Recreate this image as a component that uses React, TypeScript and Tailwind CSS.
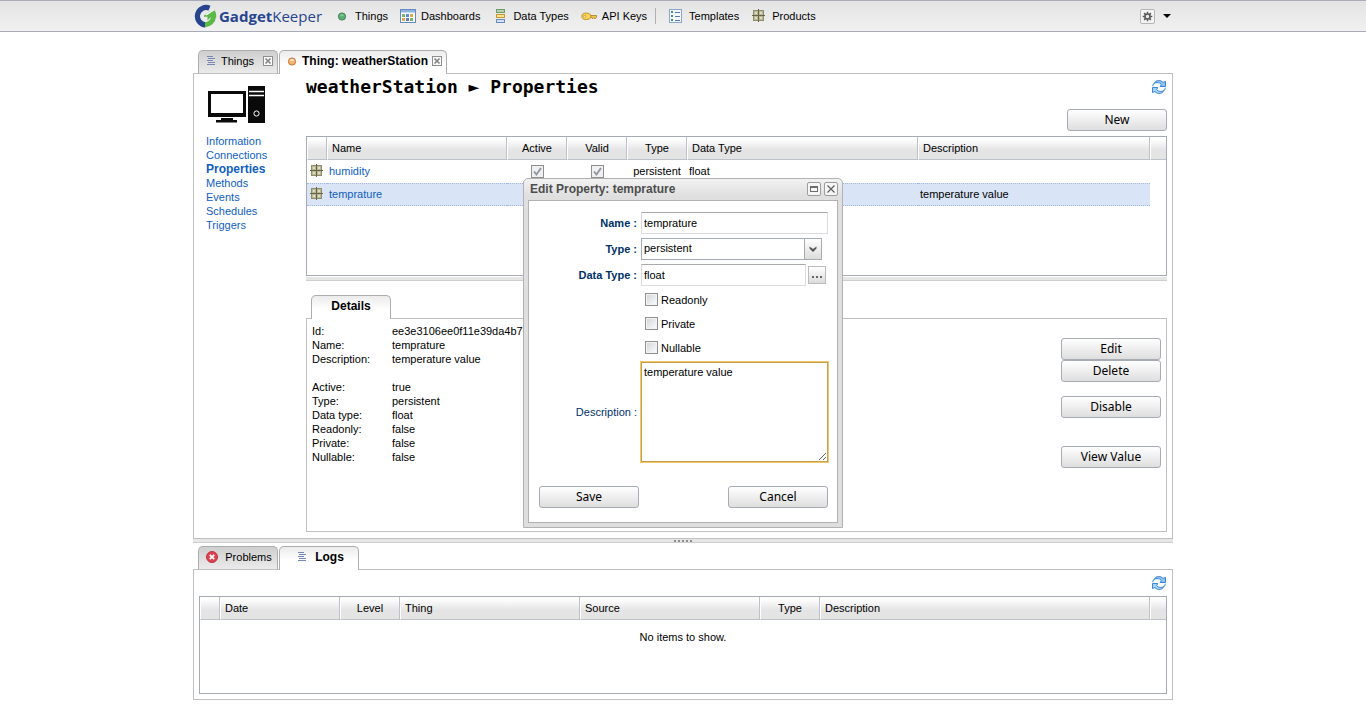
import React, { useState } from 'react';

interface Column {
  title: string;
  width: string;
  center?: boolean;
}

const propertyColumns: Column[] = [
  { title: '', width: 'w-[20px]' },
  { title: 'Name', width: 'w-[180px]' },
  { title: 'Active', width: 'w-[60px]', center: true },
  { title: 'Valid', width: 'w-[60px]', center: true },
  { title: 'Type', width: 'w-[60px]', center: true },
  { title: 'Data Type', width: 'w-[231px]' },
  { title: 'Description', width: '' },
  { title: '', width: 'w-[16px]' },
];

const logColumns: Column[] = [
  { title: '', width: 'w-[20px]' },
  { title: 'Date', width: 'w-[120px]' },
  { title: 'Level', width: 'w-[60px]', center: true },
  { title: 'Thing', width: 'w-[180px]' },
  { title: 'Source', width: 'w-[180px]' },
  { title: 'Type', width: 'w-[60px]', center: true },
  { title: 'Description', width: '' },
  { title: '', width: 'w-[16px]' },
];

const properties = [
  { name: 'humidity', type: 'persistent', dataType: 'float', description: '', selected: false },
  { name: 'temprature', type: '', dataType: '', description: 'temperature value', selected: true },
];

const sections = ['Information', 'Connections', 'Properties', 'Methods', 'Events', 'Schedules', 'Triggers'];

const details = [
  ['Id:', 'ee3e3106ee0f11e39da4b7063a12c8e4'],
  ['Name:', 'temprature'],
  ['Description:', 'temperature value'],
  ['', ''],
  ['Active:', 'true'],
  ['Type:', 'persistent'],
  ['Data type:', 'float'],
  ['Readonly:', 'false'],
  ['Private:', 'false'],
  ['Nullable:', 'false'],
];

const Logo = () => (
  <svg className="w-6 h-6" viewBox="0 0 24 24">
    <path d="M16.5 4.2A8.7 8.7 0 1 0 12.5 20.9" fill="none" stroke="#27458f" strokeWidth="5.2" />
    <path d="M12 20.8A8.7 8.7 0 0 0 20.5 12.5" fill="none" stroke="#5cb947" strokeWidth="5" />
    <path d="M11 11.5L16.5 7.5L21 5.5C22.6 7.4 23.4 9.6 23.3 13.5H17.4L14.5 16.5V12.8H11z" fill="#5cb947" />
    <path d="M12.2 10.4L20.6 4.9L21.6 6.2L13.4 11.4z" fill="#f3f5ee" />
  </svg>
);

const DotIcon = () => (
  <svg className="w-4 h-4" viewBox="0 0 16 16">
    <circle cx="8" cy="8.5" r="3.6" fill="#5fae74" stroke="#3b8452" />
    <path d="M6 7.5A2.4 2.4 0 0 1 10 7.5z" fill="#a9dcb4" />
  </svg>
);

const DashboardIcon = () => (
  <svg className="w-4 h-4" viewBox="0 0 16 16">
    <rect x="0.5" y="1.5" width="15" height="13" fill="#fff" stroke="#6489bd" />
    <rect x="1" y="2" width="14" height="2.5" fill="#8fb2e2" />
    <path d="M2 6h3v3H2zM10 10h3v3h-3z" fill="#7db56f" />
    <path d="M6 6h3v3H6z" fill="#5b8fd0" />
    <path d="M10 6h3v3h-3zM2 10h3v3H2z" fill="#e2a74c" />
    <path d="M6 10h3v3H6z" fill="#5f7fb6" />
  </svg>
);

const StackIcon = () => (
  <svg className="w-4 h-4" viewBox="0 0 16 16">
    <rect x="4.5" y="1.500" width="8" height="3" fill="#b8d3a8" stroke="#719a6a" />
    <rect x="4.5" y="6.500" width="8" height="3" fill="#fbe38b" stroke="#c49636" />
    <rect x="4.5" y="11.500" width="8" height="3" fill="#d3e0f5" stroke="#6b8dbd" />
  </svg>
);

const KeyIcon = () => (
  <svg className="w-4 h-4" viewBox="0 0 16 16">
    <path d="M9 7.5H15.5V9L14.5 10.5H13.5L13 9.500L12 10.500H11V9.200H9z" fill="#f2cb4e" stroke="#a97b24" strokeWidth="0.8" />
    <ellipse cx="5.300" cy="8.300" rx="4.500" ry="3.200" fill="#f8d553" stroke="#c0912c" />
    <ellipse cx="3.600" cy="8.300" rx="1.200" ry="0.900" fill="#fff" stroke="#a97b24" strokeWidth="0.6" />
  </svg>
);

const TemplateIcon = () => (
  <svg className="w-4 h-4" viewBox="0 0 16 16">
    <rect x="1.5" y="1.5" width="12" height="13" fill="#f4f8fe" stroke="#8ba6cd" />
    <path d="M3 3h2v2H3zM3 7h2v2H3zM3 11h2v2H3z" fill="#3f9466" />
    <path d="M7 4.5h5M7 8.5h5M7 12.5h5" stroke="#5978ac" />
  </svg>
);

const ProductIcon = () => (
  <svg className="w-4 h-4 shrink-0" viewBox="0 0 16 16">
    <rect x="2" y="2" width="11" height="11" fill="#8f8e6c" />
    <path d="M3 3h4v4H3zM8 3h4v4H8zM3 8h4v4H3zM8 8h4v4H8z" fill="#b9b894" />
    <path d="M4 4h2v2H4zM9 4h2v2H9zM4 9h2v2H4zM9 9h2v2H9z" fill="#dddcc4" />
    <path d="M7.5 1v13M1 7.5h13" stroke="#66654a" />
  </svg>
);

const LinesIcon = () => (
  <svg className="w-4 h-4" viewBox="0 0 16 16">
    <path d="M4 3.5h6M5 5.5h7M4 7.5h6M5 9.5h7M4 11.5h8" stroke="#7788b4" />
  </svg>
);

const ThingIcon = () => (
  <svg className="w-4 h-4" viewBox="0 0 16 16">
    <circle cx="8" cy="8.5" r="3.6" fill="#f6b56c" stroke="#c9713b" />
    <path d="M5.5 8A2.6 2.6 0 0 1 10.5 8z" fill="#fde9c9" />
  </svg>
);

const ErrorIcon = () => (
  <svg className="w-4 h-4" viewBox="0 0 16 16">
    <circle cx="8" cy="8" r="5.5" fill="#dd4250" stroke="#c0303f" />
    <path d="M5.8 5.8l4.4 4.4M10.2 5.8l-4.4 4.4" stroke="#fff" strokeWidth="1.8" />
  </svg>
);

const CloseIcon = () => (
  <svg className="w-[10px] h-[10px]" viewBox="0 0 10 10">
    <rect x="0.5" y="0.5" width="9" height="9" fill="#fafafa" stroke="#8e8e8e" />
    <path d="M2.5 2.5l5 5M7.5 2.5l-5 5" stroke="#858585" strokeWidth="1.7" />
  </svg>
);

const RefreshIcon = () => (
  <svg className="w-4 h-4" viewBox="0 0 16 16">
    <path d="M3 4.500C5 0.800 9.500 0.600 12 3.400L14.500 2.500V7.500H9.200L10.400 5.400C8.400 3.200 5.500 3 3 4.500z" fill="#8cc4f5" stroke="#2e7bcb" strokeWidth="0.9" />
    <path d="M13 11.500C11 15.200 6.500 15.400 4 12.600L1.500 13.500V8.500H6.800L5.600 10.600C7.600 12.800 10.500 13 13 11.500z" fill="#a6d4fa" stroke="#2e7bcb" strokeWidth="0.9" />
    <path d="M1.600 7.300C1.800 5.600 2.700 4.600 4 4M14.400 8.700C14.200 10.400 13.300 11.400 12 12" fill="none" stroke="#5aa4e8" strokeWidth="1.200" />
  </svg>
);

const ComputerIcon = () => (
  <svg className="w-[58px] h-[38px]" viewBox="0 0 58 38">
    <path d="M0 5h38v26H0zM3 8v19h32V8z" fill="#0a0a0a" fillRule="evenodd" />
    <path d="M13 32h12v2h4v2.500H8V34h5z" fill="#0a0a0a" />
    <path d="M40 0h17v37H40z" fill="#0a0a0a" />
    <path d="M41 5.5h15M41 9.5h15" stroke="#fff" strokeWidth="1.6" />
    <circle cx="48.500" cy="27.500" r="2.600" fill="none" stroke="#fff" />
  </svg>
);

const GearIcon = () => (
  <svg className="w-[11px] h-[11px]" viewBox="0 0 11 11">
    <path d="M5.500 0.700v9.600M0.700 5.500h9.600M2.100 2.100l6.800 6.800M8.900 2.100l-6.800 6.800" stroke="#5a5a5a" strokeWidth="1.500" />
    <circle cx="5.500" cy="5.500" r="2.500" fill="#eee" stroke="#5a5a5a" strokeWidth="1.600" />
  </svg>
);

const Button = ({ label, onClick }: { label: string; onClick?: () => void }) => (
  <button
    onClick={onClick}
    className="block w-[100px] h-[22px] rounded-[3px] border border-[#a7abb4] bg-gradient-to-b from-white to-[#dedede] text-center text-xs leading-5 text-black font-['Noto_Sans',sans-serif]"
  >
    {label}
  </button>
);

const HeaderRow = ({ columns }: { columns: Column[] }) => (
  <thead>
    <tr className="h-[23px]">
      {columns.map((c, i) => (
        <th
          key={i}
          className={`${c.width} border-b border-b-[#bdc1c9] border-r border-r-[#bdc1c9] border-l border-l-white last:border-r-0 bg-gradient-to-b from-white from-10% to-[#e4e4e4] to-60% px-1 font-normal ${c.center ? 'text-center' : 'text-left'}`}
        >
          {c.title}
        </th>
      ))}
    </tr>
  </thead>
);

const Tick = () => (
  <span className="relative inline-block w-[13px] h-[13px] align-middle">
    <input type="checkbox" checked readOnly aria-label="enabled" className="block appearance-none w-[13px] h-[13px] border border-[#8f8f8f] bg-[#f0f0f0]" />
    <svg className="absolute inset-0 w-[13px] h-[13px] pointer-events-none" viewBox="0 0 13 13">
      <path d="M3 6.500l2.500 3L10 3" fill="none" stroke="#9097a3" strokeWidth="1.900" />
    </svg>
  </span>
);

interface TabProps {
  label: string;
  icon?: React.ReactNode;
  active?: boolean;
  closable?: boolean;
}

const Tab = ({ label, icon, active, closable }: TabProps) => (
  <div
    className={`flex items-center rounded-t-[5px] border border-b-0 border-[#adadad] bg-gradient-to-b pb-[3px] ${
      active
        ? 'h-6 -mb-px from-[#ececec] to-white to-60% text-xs leading-[14px] font-bold'
        : 'h-[23px] from-[#cfcfcf] to-[#ebebeb]'
    } ${closable ? 'gap-[2px] px-1' : 'justify-center gap-[5px]'} ${closable && active ? 'w-[168px]' : 'w-[80px]'}`}
  >
    {icon}
    <button className="whitespace-nowrap">{label}</button>
    {closable && (
      <button aria-label={`Close ${label}`} className="ml-auto">
        <CloseIcon />
      </button>
    )}
  </div>
);

const MenuItem = ({ label, icon }: { label: string; icon: React.ReactNode }) => (
  <a href="#" className="flex items-center gap-[5px]">
    {icon}
    {label}
  </a>
);

const CheckRow = ({ label }: { label: string }) => (
  <label className="flex h-6 items-center gap-[3px] pl-[116px]">
    <input type="checkbox" className="appearance-none w-[13px] h-[13px] border border-[#8f8f8f] bg-gradient-to-br from-[#cfd3d8] to-white shadow-[inset_0_0_0_1px_#f4f4f4]" />
    {label}
  </label>
);

const EditDialog = ({ onClose }: { onClose: () => void }) => {
  const [name, setName] = useState('temprature');
  const [type, setType] = useState('persistent');
  const [dataType, setDataType] = useState('float');
  const [description, setDescription] = useState('temperature value');

  const labelStyle = 'w-[112px] shrink-0 pr-1 text-right text-[#003168]';
  const inputStyle = 'h-[22px] border border-[#dcdcdf] border-t-[#a9a9ae] bg-white px-[2px] outline-none';

  return (
    <div className="absolute inset-0 flex items-center justify-center">
      <div role="dialog" aria-label="Edit Property" className="w-[320px] rounded-t-[5px] border border-[#b2b2b2] bg-gradient-to-b from-[#f2f2f2] to-[#dfdfdf] to-5% px-1 pb-1">
        <div className="flex h-[21px] items-center gap-[3px] pl-[2px] text-xs font-bold text-[#4d4d4d]">
          <h2 className="flex-1">Edit Property: temprature</h2>
          <button aria-label="Maximize" className="flex w-[14px] h-[14px] items-center justify-center rounded-[2px] border border-[#9c9c9c] bg-[#f6f6f6]">
            <span className="w-2 h-[6px] border border-t-2 border-[#6c6c6c]" />
          </button>
          <button aria-label="Close" onClick={onClose} className="flex w-[14px] h-[14px] items-center justify-center rounded-[2px] border border-[#9c9c9c] bg-[#f6f6f6]">
            <svg className="w-2 h-2" viewBox="0 0 8 8">
              <path d="M0.500 0.500l7 7M7.500 0.500l-7 7" stroke="#5f5f5f" strokeWidth="1.200" />
            </svg>
          </button>
        </div>
        <form className="border border-[#b2b2b2] bg-white pt-[9px] pb-[14px]" onSubmit={(e) => e.preventDefault()}>
          <div className="flex h-[26px] items-center">
            <label htmlFor="name" className={`${labelStyle} font-bold`}>Name :</label>
            <input id="name" value={name} onChange={(e) => setName(e.target.value)} className={`${inputStyle} w-[187px]`} />
          </div>
          <div className="flex h-[26px] items-center">
            <label htmlFor="type" className={`${labelStyle} font-bold`}>Type :</label>
            <div className="relative">
              <select
                id="type"
                value={type}
                onChange={(e) => setType(e.target.value)}
                className="block w-[181px] h-[22px] appearance-none border border-[#a7abb4] bg-white px-[2px] pb-[2px] outline-none"
              >
                <option>persistent</option>
                <option>transient</option>
              </select>
              <span className="pointer-events-none absolute right-0 top-0 flex w-[18px] h-[22px] items-center justify-center border border-[#a7abb4] bg-gradient-to-b from-white to-[#dcdcdc]">
                <svg className="w-2 h-[6px]" viewBox="0 0 8 6">
                  <path d="M0.500 0.500L4 3L7.500 0.500V2.500L4 6L0.500 2.500z" fill="#555" />
                </svg>
              </span>
            </div>
          </div>
          <div className="flex h-[26px] items-center">
            <label htmlFor="dataType" className={`${labelStyle} font-bold`}>Data Type :</label>
            <input id="dataType" value={dataType} onChange={(e) => setDataType(e.target.value)} className={`${inputStyle} w-[165px]`} />
            <button type="button" aria-label="Browse" className="ml-[2px] flex w-[18px] h-[18px] items-center justify-center gap-[2px] border border-[#bcbcbc] bg-gradient-to-b from-white to-[#dcdcdc]">
              <span className="mt-[5px] w-[2px] h-[2px] bg-[#666]" />
              <span className="mt-[5px] w-[2px] h-[2px] bg-[#666]" />
              <span className="mt-[5px] w-[2px] h-[2px] bg-[#666]" />
            </button>
          </div>
          <CheckRow label="Readonly" />
          <CheckRow label="Private" />
          <CheckRow label="Nullable" />
          <div className="flex items-center pt-[2px]">
            <label htmlFor="description" className={labelStyle}>Description :</label>
            <textarea
              id="description"
              value={description}
              onChange={(e) => setDescription(e.target.value)}
              className="block w-[187px] h-[100px] border border-[#c9a050] bg-white p-[2px] leading-[14px] outline outline-[#f0c66a]"
            />
          </div>
          <div className="mt-6 flex justify-between pl-[10px] pr-[9px]">
            <Button label="Save" />
            <Button label="Cancel" onClick={onClose} />
          </div>
        </form>
      </div>
    </div>
  );
};

const App: React.FC = () => {
  const [dialogOpen, setDialogOpen] = useState(true);

  return (
    <div className="relative min-h-screen bg-white text-[11px] leading-[14px] text-black font-['Liberation_Sans',Arial,sans-serif]">
      <header className="h-8 border-y border-[#a9abb8] bg-gradient-to-b from-[#e3e3e3] to-[#f1f1f1]">
        <nav className="mx-auto flex h-full w-full max-w-[980px] items-center gap-3">
          <a href="#" className="flex items-center gap-[2px] font-['Open_Sans',sans-serif] text-[15px] leading-6 text-[#27458f]">
            <Logo />
            <span><b>Gadget</b>Keeper</span>
          </a>
          <MenuItem label="Things" icon={<DotIcon />} />
          <MenuItem label="Dashboards" icon={<DashboardIcon />} />
          <MenuItem label="Data Types" icon={<StackIcon />} />
          <MenuItem label="API Keys" icon={<KeyIcon />} />
          <span className="-ml-1 w-px h-4 bg-[#b0b0b0]" />
          <MenuItem label="Templates" icon={<TemplateIcon />} />
          <MenuItem label="Products" icon={<ProductIcon />} />
          <button aria-label="Settings" className="ml-auto mr-[2px] flex items-center gap-2">
            <span className="flex w-[15px] h-[15px] items-center justify-center rounded-[2px] border border-[#b5b5b5] bg-[#f4f4f4]">
              <GearIcon />
            </span>
            <svg className="w-2 h-1" viewBox="0 0 8 4">
              <path d="M0 0h8L4 4z" fill="#000" />
            </svg>
          </button>
        </nav>
      </header>

      <main className="mx-auto w-full max-w-[980px] pt-[18px]">
        <div className="flex items-end gap-px pl-[5px]">
          <Tab label="Things" icon={<LinesIcon />} closable />
          <Tab label="Thing: weatherStation" icon={<ThingIcon />} active closable />
        </div>
        <section className="flex border border-b-0 border-[#bfc0c4] pr-[5px] pb-[6px]">
          <aside className="w-[112px] shrink-0 pl-3 pt-3">
            <div className="pl-[2px]"><ComputerIcon /></div>
            <ul className="mt-[10px]">
              {sections.map((s) => (
                <li key={s}>
                  <a href="#" className={`block text-[#0f5ec4] ${s === 'Properties' ? 'text-xs leading-[14px] font-bold' : ''}`}>{s}</a>
                </li>
              ))}
            </ul>
          </aside>

          <div className="flex-1 min-w-0">
            <div className="flex h-[35px] items-start justify-between pt-[2px]">
              <h1 className="font-['DejaVu_Sans_Mono',monospace] text-lg leading-[22px] font-bold">weatherStation ► Properties</h1>
              <button aria-label="Refresh" className="mt-[3px]"><RefreshIcon /></button>
            </div>
            <div className="flex justify-end">
              <Button label="New" />
            </div>

            <div className="mt-[5px] h-[140px] border border-[#a7abb4]">
              <table className="w-full table-fixed border-separate border-spacing-0">
                <HeaderRow columns={propertyColumns} />
                <tbody>
                  {properties.map((p) => {
                    const cell = p.selected ? 'border-y border-dotted border-[#a3b7e0] bg-[#d9e4f7] px-[2px] pb-[2px]' : 'px-[2px] pb-[2px]';
                    return (
                      <tr key={p.name} className="h-[23px]">
                        <td className={cell}><ProductIcon /></td>
                        <td className={cell}><a href="#" className="text-[#0f5ec4]">{p.name}</a></td>
                        <td className={`${cell} text-center`}><Tick /></td>
                        <td className={`${cell} text-center`}><Tick /></td>
                        <td className={`${cell} text-center`}>{p.type}</td>
                        <td className={cell}>{p.dataType}</td>
                        <td className={cell}>{p.description}</td>
                        <td />
                      </tr>
                    );
                  })}
                </tbody>
              </table>
            </div>
            <div className="mt-px h-1 border-b border-[#cfcfcf] bg-[#e6e6e6]" />

            <div className="mt-[14px] flex items-end pl-[5px]">
              <Tab label="Details" active />
            </div>
            <div className="flex h-[214px] justify-between border border-[#bfc0c4] pl-[5px] pr-[5px] pt-[5px]">
              <dl>
                {details.map(([key, value], i) => (
                  <div key={i} className="flex h-[14px]">
                    <dt className="w-[80px]">{key}</dt>
                    <dd>{value}</dd>
                  </div>
                ))}
              </dl>
              <div className="pt-[14px]">
                <Button label="Edit" />
                <Button label="Delete" />
                <div className="mt-[14px]"><Button label="Disable" /></div>
                <div className="mt-7"><Button label="View Value" /></div>
              </div>
            </div>
          </div>
        </section>

        <div className="flex h-[5px] items-center justify-center gap-[2px] border-t border-b border-t-[#bfc0c4] border-b-[#cfcfcf] bg-[#e6e6e6]">
          {[0, 1, 2, 3, 4].map((n) => (
            <span key={n} className="w-[2px] h-[2px] bg-[#8d8d8d]" />
          ))}
        </div>

        <div className="mt-[3px] flex items-end gap-px pl-[5px]">
          <Tab label="Problems" icon={<ErrorIcon />} />
          <Tab label="Logs" icon={<LinesIcon />} active />
        </div>
        <section className="border border-[#bfc0c4] px-[5px] pb-[5px]">
          <div className="flex h-[26px] items-center justify-end">
            <button aria-label="Refresh logs"><RefreshIcon /></button>
          </div>
          <div className="h-[98px] border border-[#a7abb4]">
            <table className="w-full table-fixed border-separate border-spacing-0">
              <HeaderRow columns={logColumns} />
              <tbody>
                <tr>
                  <td colSpan={8} className="pt-[10px] text-center">No items to show.</td>
                </tr>
              </tbody>
            </table>
          </div>
        </section>
      </main>

      {dialogOpen && <EditDialog onClose={() => setDialogOpen(false)} />}
    </div>
  );
};

export default App;
